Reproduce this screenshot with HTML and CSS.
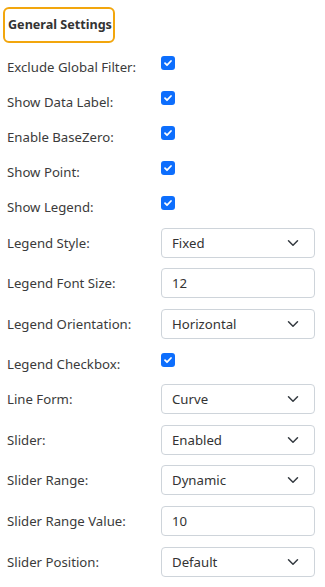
FILE: index.html
```html
<!DOCTYPE html>
<html lang="en">
<head>
    <meta charset="UTF-8">
    <meta name="viewport" content="width=device-width, initial-scale=1.0">
    <title>General Settings</title>
    <link rel="stylesheet" href="styles.css">
</head>
<body>
    <div class="panel">
        <div class="section-title">General Settings</div>

        <div class="row check-row">
            <label class="field-label">Exclude Global Filter:</label>
            <span class="checkbox"><svg viewBox="0 0 14 14"><path d="M4 7.2 6 9.2 10 5"/></svg></span>
        </div>
        <div class="row check-row">
            <label class="field-label">Show Data Label:</label>
            <span class="checkbox"><svg viewBox="0 0 14 14"><path d="M4 7.2 6 9.2 10 5"/></svg></span>
        </div>
        <div class="row check-row">
            <label class="field-label">Enable BaseZero:</label>
            <span class="checkbox"><svg viewBox="0 0 14 14"><path d="M4 7.2 6 9.2 10 5"/></svg></span>
        </div>
        <div class="row check-row">
            <label class="field-label">Show Point:</label>
            <span class="checkbox"><svg viewBox="0 0 14 14"><path d="M4 7.2 6 9.2 10 5"/></svg></span>
        </div>
        <div class="row check-row">
            <label class="field-label">Show Legend:</label>
            <span class="checkbox"><svg viewBox="0 0 14 14"><path d="M4 7.2 6 9.2 10 5"/></svg></span>
        </div>

        <div class="row">
            <label class="field-label">Legend Style:</label>
            <div class="select">Fixed<svg viewBox="0 0 16 16"><path d="m2 5 6 6 6-6"/></svg></div>
        </div>
        <div class="row">
            <label class="field-label">Legend Font Size:</label>
            <div class="input">12</div>
        </div>
        <div class="row">
            <label class="field-label">Legend Orientation:</label>
            <div class="select">Horizontal<svg viewBox="0 0 16 16"><path d="m2 5 6 6 6-6"/></svg></div>
        </div>
        <div class="row check-row">
            <label class="field-label">Legend Checkbox:</label>
            <span class="checkbox"><svg viewBox="0 0 14 14"><path d="M4 7.2 6 9.2 10 5"/></svg></span>
        </div>
        <div class="row">
            <label class="field-label">Line Form:</label>
            <div class="select">Curve<svg viewBox="0 0 16 16"><path d="m2 5 6 6 6-6"/></svg></div>
        </div>
        <div class="row">
            <label class="field-label">Slider:</label>
            <div class="select">Enabled<svg viewBox="0 0 16 16"><path d="m2 5 6 6 6-6"/></svg></div>
        </div>
        <div class="row">
            <label class="field-label">Slider Range:</label>
            <div class="select">Dynamic<svg viewBox="0 0 16 16"><path d="m2 5 6 6 6-6"/></svg></div>
        </div>
        <div class="row">
            <label class="field-label">Slider Range Value:</label>
            <div class="input">10</div>
        </div>
        <div class="row">
            <label class="field-label">Slider Position:</label>
            <div class="select">Default<svg viewBox="0 0 16 16"><path d="m2 5 6 6 6-6"/></svg></div>
        </div>
    </div>
</body>
</html>
```

FILE: styles.css
```css
body {
    margin: 0;
    background: #fff;
    font-family: "Noto Sans", "Open Sans", sans-serif;
    font-size: 13.2px;
    color: #3b3b3b;
}
.panel {
    padding: 7px 10px 0 3px;
}
.section-title {
    display: inline-block;
    box-sizing: border-box;
    width: 112px;
    height: 36px;
    line-height: 32px;
    padding: 0 3px;
    border: 2px solid #f2a60d;
    border-radius: 6px;
    font-size: 12.6px;
    font-weight: bold;
    color: #333;
    white-space: nowrap;
    margin-bottom: 9.5px;
}
.row {
    display: flex;
    align-items: center;
    height: 30px;
    margin-bottom: 10.6px;
    padding-left: 4px;
}
.check-row {
    box-sizing: border-box;
    height: 26.5px;
    padding-top: 2.5px;
    margin-bottom: 8.5px;
}
.field-label {
    width: 154px;
    flex-shrink: 0;
}
.checkbox {
    width: 14px;
    height: 14px;
    border-radius: 3px;
    background: #0d6efd;
    display: inline-flex;
    margin-top: -8px;
}
.checkbox svg {
    width: 14px;
    height: 14px;
    fill: none;
    stroke: #fff;
    stroke-width: 1.8;
    stroke-linecap: round;
    stroke-linejoin: round;
}
.select, .input {
    box-sizing: border-box;
    width: 154px;
    height: 30px;
    border: 1px solid #ced4da;
    border-radius: 4px;
    padding: 0 10px;
    display: flex;
    align-items: center;
    justify-content: space-between;
    color: #333;
}
.select svg {
    width: 16px;
    height: 12px;
    margin-right: 3px;
    fill: none;
    stroke: #343a40;
    stroke-width: 2;
    stroke-linecap: round;
    stroke-linejoin: round;
}
```
